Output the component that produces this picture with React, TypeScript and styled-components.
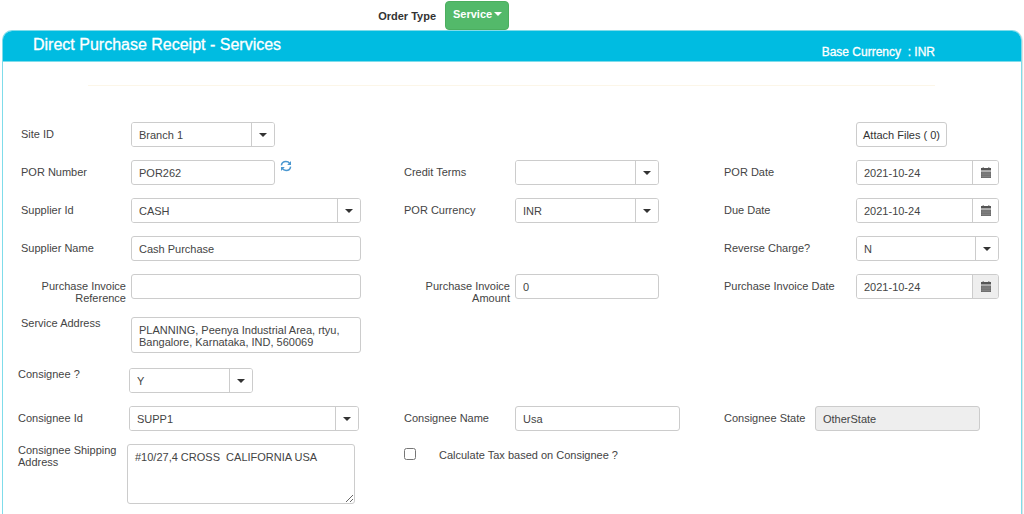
import React, { useState } from "react";
import styled, { createGlobalStyle } from "styled-components";

const GlobalStyle = createGlobalStyle`
  *, *::before, *::after { box-sizing: border-box; }
  body {
    margin: 0;
    background: #fff;
    color: #444;
    font: 11px/12px "Liberation Sans", Arial, Helvetica, sans-serif;
  }
`;

const Page = styled.div`
  display: flex;
  flex-direction: column;
  min-height: 100vh;
  padding: 1px 2px 0;
  overflow-x: hidden;
`;

const OrderBar = styled.div`
  display: grid;
  grid-template-columns: 434fr 577fr;
  align-items: center;
  column-gap: 9px;
`;

const OrderLabel = styled.label`
  justify-self: end;
  font-weight: bold;
  color: #333;
`;

const OrderButton = styled.button`
  display: flex;
  align-items: center;
  justify-self: start;
  gap: 2px;
  height: 29px;
  padding: 0 6px 4px 7px;
  border: 1px solid #4cae5f;
  border-radius: 4px;
  background: #53b96a;
  color: #fff;
  font: bold 11px/12px "Liberation Sans", Arial, Helvetica, sans-serif;
`;

const Caret = styled.span`
  border-top: 4px solid currentColor;
  border-left: 4px solid transparent;
  border-right: 4px solid transparent;
`;

const Panel = styled.main`
  flex: 1;
  border: 1px solid #7fdcea;
  border-bottom: 0;
  border-radius: 10px 10px 0 0;
  box-shadow: 1px 1px 1px #ddd;
  overflow: hidden;
`;

const PanelHeader = styled.header`
  display: flex;
  justify-content: space-between;
  height: 31px;
  padding: 5px 86px 0 30px;
  border-bottom: 1px solid #7fdcea;
  background: #00bce1;
  color: #fff;
`;

const Title = styled.h1`
  margin: 0;
  font-size: 16px;
  line-height: 18px;
  font-weight: normal;
  -webkit-text-stroke: 0.3px #fff;
`;

const Currency = styled.div`
  padding-top: 8px;
  font-size: 12px;
  line-height: 16px;
  white-space: pre;
  -webkit-text-stroke: 0.3px #fff;
`;

const Divider = styled.hr`
  margin: 23px 86px 36px 85px;
  border: 0;
  border-top: 1px solid #fcf6e8;
`;

const Section = styled.div`
  display: grid;
  row-gap: 13px;
  padding: 0 22px 0 15px;
  margin-bottom: 15px;
`;

const InsetSection = styled(Section)`
  padding-left: 18px;
`;

const Row = styled.div`
  display: grid;
  grid-template-columns: 386fr 320fr 275fr;
  align-items: start;

  ${InsetSection} & {
    grid-template-columns: 383fr 320fr 275fr;
  }
`;

const Field = styled.div<{ $column?: number; $labelWidth?: number }>`
  display: grid;
  grid-column: ${(p) => p.$column ?? 1};
  grid-template-columns: ${(p) => p.$labelWidth ?? 110}px 1fr;
  align-items: start;
`;

const Label = styled.label<{ $top?: boolean; $right?: boolean }>`
  padding: ${(p) => (p.$top ? 0 : 6)}px 5px 0 0;
  text-align: ${(p) => (p.$right ? "right" : "left")};
`;

const Control = styled.div<{ $width: number }>`
  display: flex;
  align-items: flex-start;
  gap: 5px;
  width: ${(p) => p.$width}px;
`;

const TextInput = styled.input`
  width: 100%;
  min-width: 0;
  height: 25px;
  padding: 0 7px;
  border: 1px solid #ccc;
  border-radius: 3px;
  background: #fff;
  color: #444;
  font: inherit;
  outline: 0;
  &:disabled { background: #eee; }
`;

const TextArea = styled.textarea<{ $fixed?: boolean }>`
  display: block;
  width: 100%;
  height: ${(p) => (p.$fixed ? 36 : 60)}px;
  padding: 6px 7px;
  border: 1px solid #ccc;
  border-radius: 3px;
  color: #444;
  font: inherit;
  overflow: hidden;
  resize: ${(p) => (p.$fixed ? "none" : "both")};
  outline: 0;
`;

const Group = styled.div`
  display: grid;
  grid-template-columns: 1fr auto;
  width: 100%;
  height: 25px;
  border: 1px solid #ccc;
  border-radius: 3px;
  overflow: hidden;
`;

const Picker = styled.select`
  grid-area: 1 / 1 / 2 / 3;
  width: 100%;
  height: 23px;
  padding: 0 30px 0 7px;
  border: 0;
  background: #fff;
  color: #444;
  font: inherit;
  appearance: none;
  outline: 0;
`;

const Arrow = styled.span`
  grid-area: 1 / 2;
  display: grid;
  place-items: center;
  width: 23px;
  border-left: 1px solid #ccc;
  color: #333;
  pointer-events: none;
`;

const DateInput = styled.input`
  min-width: 0;
  padding: 0 7px;
  border: 0;
  color: #444;
  font: inherit;
  outline: 0;
`;

const DateButton = styled.button<{ $shaded?: boolean }>`
  display: grid;
  place-items: center;
  width: 26px;
  padding: 0;
  border: 0;
  border-left: 1px solid #ccc;
  background: ${(p) => (p.$shaded ? "#eee" : "#fff")};
  color: #555;
`;

const AttachButton = styled.button`
  height: 25px;
  padding: 0 6px;
  border: 1px solid #ccc;
  border-radius: 3px;
  background: #fff;
  color: #333;
  font: inherit;
  white-space: nowrap;
`;

const RefreshButton = styled.button`
  display: flex;
  flex: none;
  padding: 0;
  border: 0;
  background: none;
  color: #4a97d0;
`;

const CheckField = styled.div`
  display: grid;
  grid-column: 2 / 4;
  grid-template-columns: 12px auto;
  justify-content: start;
  align-items: start;
  column-gap: 23px;
  padding-top: 4px;
`;

const Checkbox = styled.input`
  width: 12px;
  height: 12px;
  margin: 0;
`;

const CheckLabel = styled.label`
  padding-top: 1px;
`;

function CalendarIcon() {
  return (
    <svg width="12" height="12" viewBox="0 0 12 12" fill="currentColor" aria-hidden="true">
      <path d="M1 1h1.5V0.4h1.5V1h4V0.4h1.5V1H11v2.6H1z" />
      <path d="M1 4.4h10V11H1z" fill="#666" />
      <path d="M1 6.1h10M1 7.8h10M1 9.5h10M3 4.4V11M5 4.4V11M7 4.4V11M9 4.4V11" stroke="#aaa" strokeWidth="0.3" />
    </svg>
  );
}

function RefreshIcon() {
  return (
    <svg width="12" height="12" viewBox="0 0 12 12" fill="none" stroke="currentColor" strokeWidth="1.5" aria-hidden="true">
      <path d="M1.4 5.4C1.7 3 3.6 1.5 5.9 1.5C7.5 1.5 8.8 2.1 9.6 3.3M10.6 6.6C10.3 9 8.4 10.5 6.1 10.5C4.5 10.5 3.2 9.9 2.4 8.7" />
      <path d="M11 1v4H7.2zM1 11V7h3.8z" fill="currentColor" stroke="none" />
    </svg>
  );
}

type Base = {
  id: string;
  label: string;
  width: number;
  column?: number;
  labelWidth?: number;
  labelTop?: boolean;
  labelRight?: boolean;
};

function FormField({ id, label, width, column, labelWidth, labelTop, labelRight, children }: Base & { children: React.ReactNode }) {
  return (
    <Field $column={column} $labelWidth={labelWidth}>
      <Label htmlFor={id} $top={labelTop} $right={labelRight}>{label}</Label>
      <Control $width={width}>{children}</Control>
    </Field>
  );
}

function TextField({ value, disabled, ...base }: Base & { value: string; disabled?: boolean }) {
  return (
    <FormField {...base}>
      <TextInput id={base.id} defaultValue={value} disabled={disabled} />
    </FormField>
  );
}

function SelectField({ options, ...base }: Base & { options: string[] }) {
  return (
    <FormField {...base}>
      <Group>
        <Picker id={base.id}>
          {options.map((o) => <option key={o}>{o}</option>)}
        </Picker>
        <Arrow><Caret /></Arrow>
      </Group>
    </FormField>
  );
}

function DateField({ shaded, ...base }: Base & { shaded?: boolean }) {
  return (
    <FormField {...base}>
      <Group>
        <DateInput id={base.id} defaultValue="2021-10-24" />
        <DateButton type="button" $shaded={shaded} aria-label={`Choose ${base.label}`}>
          <CalendarIcon />
        </DateButton>
      </Group>
    </FormField>
  );
}

export default function App() {
  const [consigneeTax, setConsigneeTax] = useState(false);
  return (
    <>
      <GlobalStyle />
      <Page>
        <OrderBar>
          <OrderLabel htmlFor="order-type">Order Type</OrderLabel>
          <OrderButton id="order-type" type="button">Service <Caret /></OrderButton>
        </OrderBar>
        <Panel>
          <PanelHeader>
            <Title>Direct Purchase Receipt - Services</Title>
            <Currency>{"Base Currency  : INR"}</Currency>
          </PanelHeader>
          <Divider />
          <form>
            <InsetSection>
              <Row>
                <SelectField id="site" label="Site ID" width={144} options={["Branch 1"]} />
                <Field $column={3} $labelWidth={132}>
                  <span />
                  <Control $width={91}>
                    <AttachButton type="button">Attach Files ( 0)</AttachButton>
                  </Control>
                </Field>
              </Row>
              <Row>
                <FormField id="por-number" label="POR Number" width={161}>
                  <TextInput id="por-number" defaultValue="POR262" />
                  <RefreshButton type="button" aria-label="Refresh number"><RefreshIcon /></RefreshButton>
                </FormField>
                <SelectField id="credit" label="Credit Terms" width={144} column={2} labelWidth={111} options={[""]} />
                <DateField id="por-date" label="POR Date" width={143} column={3} labelWidth={132} />
              </Row>
              <Row>
                <SelectField id="supplier" label="Supplier Id" width={230} options={["CASH"]} />
                <SelectField id="currency" label="POR Currency" width={144} column={2} labelWidth={111} options={["INR"]} />
                <DateField id="due-date" label="Due Date" width={143} column={3} labelWidth={132} />
              </Row>
              <Row>
                <TextField id="supplier-name" label="Supplier Name" width={230} value="Cash Purchase" />
                <SelectField id="reverse" label="Reverse Charge?" width={143} column={3} labelWidth={132} options={["N"]} />
              </Row>
              <Row>
                <TextField id="inv-ref" label="Purchase Invoice Reference" width={230} value="" labelRight />
                <TextField id="inv-amount" label="Purchase Invoice Amount" width={144} column={2} labelWidth={111} value="0" labelRight />
                <DateField id="inv-date" label="Purchase Invoice Date" width={143} column={3} labelWidth={132} shaded />
              </Row>
              <Row>
                <FormField id="service-address" label="Service Address" width={230} labelTop>
                  <TextArea id="service-address" $fixed defaultValue={"PLANNING, Peenya Industrial Area, rtyu,\nBangalore, Karnataka, IND, 560069"} />
                </FormField>
              </Row>
            </InsetSection>
            <Section>
              <Row>
                <SelectField id="consignee" label="Consignee ?" width={124} labelWidth={111} labelTop options={["Y"]} />
              </Row>
              <Row>
                <SelectField id="consignee-id" label="Consignee Id" width={230} labelWidth={111} options={["SUPP1"]} />
                <TextField id="consignee-name" label="Consignee Name" width={165} column={2} labelWidth={111} value="Usa" />
                <TextField id="consignee-state" label="Consignee State" width={165} column={3} labelWidth={91} value="OtherState" disabled />
              </Row>
              <Row>
                <FormField id="shipping" label="Consignee Shipping Address" width={228} labelWidth={109} labelTop>
                  <TextArea id="shipping" defaultValue="#10/27,4 CROSS  CALIFORNIA USA" />
                </FormField>
                <CheckField>
                  <Checkbox id="tax" type="checkbox" checked={consigneeTax} onChange={(e) => setConsigneeTax(e.target.checked)} />
                  <CheckLabel htmlFor="tax">Calculate Tax based on Consignee ?</CheckLabel>
                </CheckField>
              </Row>
            </Section>
          </form>
        </Panel>
      </Page>
    </>
  );
}
